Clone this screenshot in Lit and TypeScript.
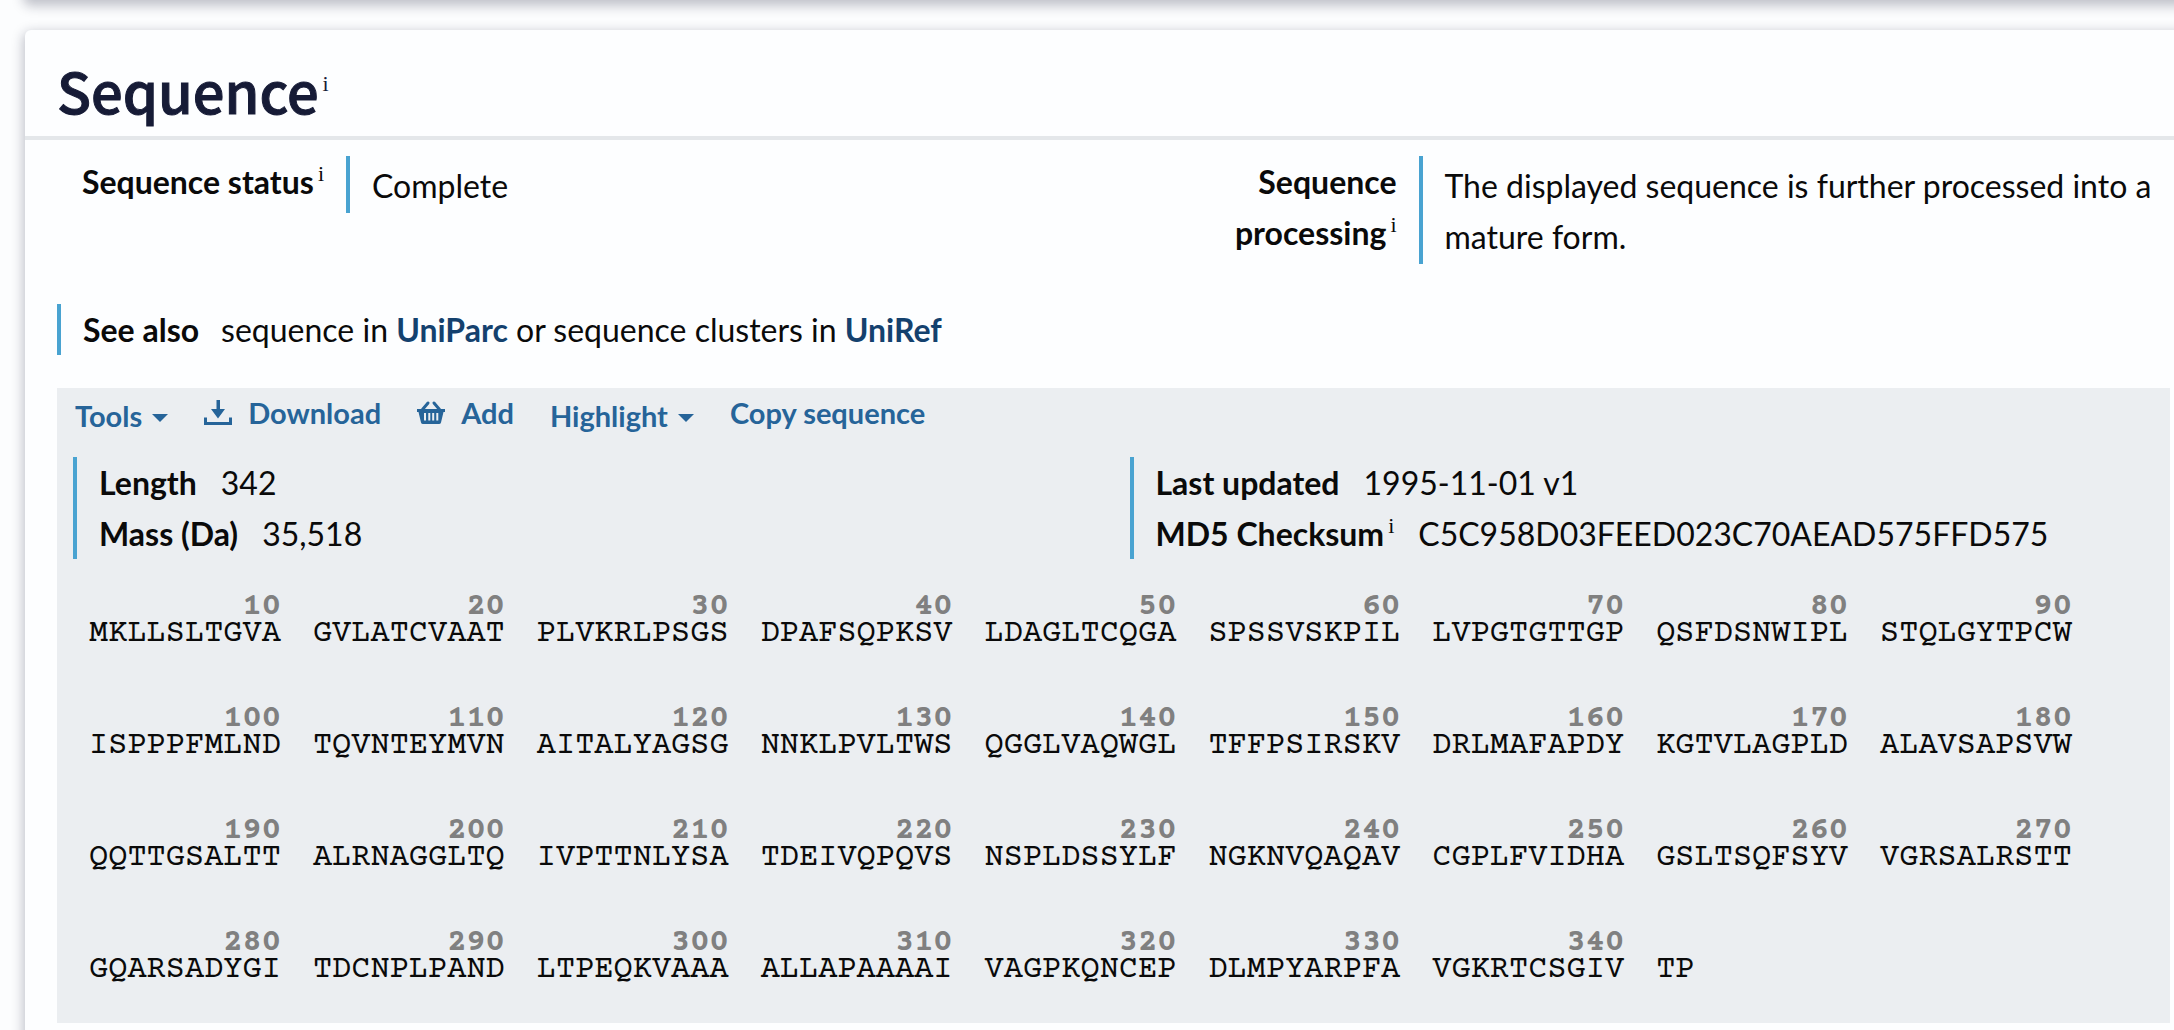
import { LitElement, html, css, svg } from "lit";
import { customElement } from "lit/decorators.js";

const SEQUENCE =
  "MKLLSLTGVAGVLATCVAATPLVKRLPSGSDPAFSQPKSVLDAGLTCQGASPSSVSKPILLVPGTGTTGPQSFDSNWIPLSTQLGYTPCW" +
  "ISPPPFMLNDTQVNTEYMVNAITALYAGSGNNKLPVLTWSQGGLVAQWGLTFFPSIRSKVDRLMAFAPDYKGTVLAGPLDALAVSAPSVW" +
  "QQTTGSALTTALRNAGGLTQIVPTTNLYSATDEIVQPQVSNSPLDSSYLFNGKNVQAQAVCGPLFVIDHAGSLTSQFSYVVGRSALRSTT" +
  "GQARSADYGITDCNPLPANDLTPEQKVAAAALLAPAAAAIVAGPKQNCEPDLMPYARPFAVGKRTCSGIVTP";

const CHUNKS = SEQUENCE.match(/.{1,10}/g) ?? [];

const downloadIcon = svg`<svg class="icon" viewBox="0 0 28 26" aria-hidden="true">
  <path d="M12.500 0h3.500v9h5l-7 9.500-7-9.500h5.500z" />
  <path d="M0 17.500h3V22h22v-4.500h3V25H0z" />
</svg>`;

const basketIcon = svg`<svg class="icon" viewBox="0 0 28 26" aria-hidden="true">
  <path fill="none" stroke="currentColor" stroke-width="3" stroke-linecap="round" d="M5.500 9.500 11 3M22.500 9.500 17 3" />
  <path fill-rule="evenodd" d="M0 9h28v3h-1.500L24 22.500Q23.600 24 22 24H6Q4.400 24 4 22.500L1.500 12H0zM7 13v7.500h2V13zM11.300 13v7.500h2V13zM15.200 13v7.500h2V13zM19.300 13v7.500h2V13z" />
</svg>`;

@customElement("app-root")
export class AppRoot extends LitElement {
  static styles = css`
    :host {
      display: block;
      height: 100vh;
      overflow: hidden;
      background: #fcfdfe;
      color: #0a0a0a;
      font-family: Lato, "Liberation Sans", sans-serif;
      font-size: 32px;
      line-height: 51px;
    }
    * { box-sizing: border-box; }
    h2, p, dl, dd, ol, ul { margin: 0; padding: 0; }
    ol, ul { list-style: none; }
    a { color: #14416e; font-weight: 700; text-decoration: none; }
    .previous {
      height: 20px;
      margin: -20px -20px 30px 25px;
      border-radius: 6px;
      background: #fcfdfe;
      box-shadow: 0 4px 12px 2px rgba(24, 28, 56, 0.26);
    }
    .card {
      min-height: 100vh;
      margin: 0 -20px 0 25px;
      padding-right: 20px;
      border-radius: 6px;
      background: #fdfeff;
      box-shadow: 0 4px 12px 2px rgba(24, 28, 56, 0.26);
    }
    .head {
      margin-right: -20px;
      padding: 26px 32px 0;
      height: 110px;
      border-bottom: 4px solid #e4e7ea;
      color: #161b36;
    }
    h2 {
      font: 500 56px/68px "Noto Sans CJK SC", sans-serif;
      -webkit-text-stroke: 1px currentColor;
    }
    .info {
      padding: 0;
      border: 0;
      background: none;
      color: inherit;
      font: 400 22px/22px "Liberation Serif", serif;
      vertical-align: 13px;
      margin-left: 4px;
      -webkit-text-stroke: 0;
    }
    h2 .info { vertical-align: 23px; }
    .facts {
      display: grid;
      grid-template-columns: 1fr 1fr;
      column-gap: 28px;
      padding-top: 16px;
      padding-left: 32px;
      align-items: start;
    }
    .fact { display: grid; grid-template-columns: 289px 1fr; align-items: start; }
    .fact dt { font-weight: 700; text-align: right; padding-right: 22px; line-height: 51px; }
    .fact dd { border-left: 4px solid #49a3d1; padding: 4px 0 2px 22px; }
    .bar { border-left: 4px solid #49a3d1; padding-left: 22px; }
    .also { margin: 40px 0 33px 32px; display: flex; gap: 22px; }
    .panel {
      margin: 0 4px 0 32px;
      padding: 4px 16px 39px;
      background: #ebeef1;
    }
    .tools { display: flex; align-items: flex-start; gap: 36px; height: 65px; padding-left: 2px; }
    .tool {
      display: flex;
      align-items: center;
      padding: 0;
      border: 0;
      background: none;
      color: #266499;
      font: 700 29px/42px Lato, sans-serif;
    }
    .drop { padding-top: 3px; gap: 10px; }
    .drop::after {
      content: "";
      border: 8px solid transparent;
      border-top-color: currentColor;
      border-bottom: 0;
      margin-top: 3px;
    }
    .icon { width: 28px; height: 26px; fill: currentColor; margin-right: 16px; }
    .meta { display: grid; grid-template-columns: 1fr 1fr; column-gap: 32px; }
    .meta dl div { display: flex; gap: 24px; }
    .meta dt { font-weight: 700; }
    .sequence {
      display: flex;
      flex-wrap: wrap;
      gap: 58px 32px;
      padding: 35px 16px 0;
      font: 32px/27px "Courier Prime", "Nimbus Mono PS", FreeMono, "Liberation Mono", monospace;
    }
    .chunk { display: flex; flex-direction: column; height: 54px; }
    .position {
      align-self: flex-end;
      color: #808080;
      font-weight: 700;
      min-height: 27px;
    }
  `;

  private info(topic: string) {
    return html`<button class="info" type="button" aria-label="About ${topic}">i</button>`;
  }

  render() {
    return html`
      <div class="previous"></div>
      <section class="card">
        <header class="head"><h2>Sequence${this.info("sequence")}</h2></header>
        <div class="facts">
          <dl class="fact"><dt>Sequence status${this.info("sequence status")}</dt><dd>Complete</dd></dl>
          <dl class="fact"><dt>Sequence processing${this.info("sequence processing")}</dt><dd>The displayed sequence is further processed into a mature form.</dd></dl>
        </div>
        <div class="also bar"><strong>See also</strong><p>sequence in <a href="#uniparc">UniParc</a> or sequence clusters in <a href="#uniref">UniRef</a></p></div>
        <div class="panel">
          <div class="tools">
            <button class="tool drop" type="button">Tools</button>
            <button class="tool" type="button">${downloadIcon}Download</button>
            <button class="tool" type="button">${basketIcon}Add</button>
            <button class="tool drop" type="button">Highlight</button>
            <button class="tool" type="button">Copy sequence</button>
          </div>
          <div class="meta">
            <dl class="bar">
              <div><dt>Length</dt><dd>342</dd></div>
              <div><dt>Mass (Da)</dt><dd>35,518</dd></div>
            </dl>
            <dl class="bar">
              <div><dt>Last updated</dt><dd>1995-11-01 v1</dd></div>
              <div><dt>MD5 Checksum${this.info("MD5 checksum")}</dt><dd>C5C958D03FEED023C70AEAD575FFD575</dd></div>
            </dl>
          </div>
          <ol class="sequence">
            ${CHUNKS.map(
              (chunk, index) => html`<li class="chunk"><span class="position">${chunk.length === 10 ? (index + 1) * 10 : ""}</span><span>${chunk}</span></li>`,
            )}
          </ol>
        </div>
      </section>
    `;
  }
}
